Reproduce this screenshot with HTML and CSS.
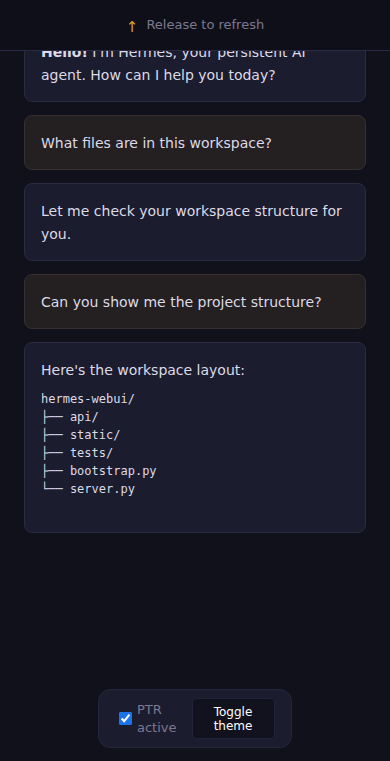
FILE: index.html
```html
<!DOCTYPE html>
<html lang="en">
<head>
    <meta charset="UTF-8">
    <meta name="viewport" content="width=device-width, initial-scale=1.0">
    <title>Hermes - Pull to refresh</title>
    <link rel="stylesheet" href="styles.css">
</head>
<body>

    <div class="ptr-bar">
        <span class="ptr-arrow">↑</span>
        <span class="ptr-text">Release to refresh</span>
    </div>

    <div class="messages">
        <div class="msg assistant">
            <b>Hello!</b> I'm Hermes, your persistent AI agent. How can I help you today?
        </div>
        <div class="msg user">What files are in this workspace?</div>
        <div class="msg assistant">Let me check your workspace structure for you.</div>
        <div class="msg user">Can you show me the project structure?</div>
        <div class="msg assistant">
            <p>Here's the workspace layout:</p>
<pre>hermes-webui/
├── api/
├── static/
├── tests/
├── bootstrap.py
└── server.py</pre>
        </div>
    </div>

    <div class="controls">
        <label class="ptr-toggle">
            <input type="checkbox" checked>
            <span>PTR<br>active</span>
        </label>
        <button class="theme-btn">Toggle<br>theme</button>
    </div>

</body>
</html>
```

FILE: styles.css
```css
body {
    font-family: "DejaVu Sans", sans-serif;
    margin: 0;
    padding: 0;
    height: 761px;
    overflow: hidden;
    background-color: #11111c;
    color: #dcdae6;
}
.ptr-bar {
    position: absolute;
    top: 0;
    left: 0;
    right: 0;
    height: 50px;
    display: flex;
    justify-content: center;
    align-items: center;
    gap: 8px;
    background-color: #0f0f1a;
    border-bottom: 1px solid #2a2a44;
    z-index: 2;
}
.ptr-arrow {
    color: #d9a22a;
    font-size: 15px;
    padding-top: 3px;
}
.ptr-text {
    color: #7b7890;
    font-size: 13px;
    padding-bottom: 2px;
}
.messages {
    display: flex;
    flex-direction: column;
    gap: 13px;
    padding: 24px 24px 0;
}
.msg {
    padding: 16px 16px 14px;
    border-radius: 8px;
    font-size: 14px;
    line-height: 23px;
}
.msg.assistant {
    background-color: #1c1c2f;
    border: 1px solid #2a2a40;
}
.msg.user {
    background-color: #241f21;
    border: 1px solid #36302f;
}
.msg p {
    margin: 0 0 8px;
}
.msg pre {
    margin: 0;
    padding-bottom: 20px;
    font-family: "DejaVu Sans Mono", monospace;
    font-size: 12px;
    line-height: 18px;
}
.controls {
    position: absolute;
    left: 98px;
    top: 689px;
    width: 194px;
    height: 59px;
    box-sizing: border-box;
    display: flex;
    align-items: center;
    gap: 15px;
    padding: 0 16px 0 20px;
    background-color: #1c1c2f;
    border: 1px solid #25253b;
    border-radius: 12px;
}
.ptr-toggle {
    display: flex;
    align-items: center;
    gap: 6px;
    color: #7b7890;
    font-size: 13px;
    line-height: 18px;
}
.ptr-toggle input {
    margin: 0;
    width: 13px;
    height: 13px;
    accent-color: #1a73e8;
}
.ptr-toggle span {
    margin-left: -1px;
}
.theme-btn {
    width: 83px;
    height: 41px;
    padding: 1px 0 0;
    background-color: #12121e;
    color: #ffffff;
    border: 1px solid #22223a;
    border-radius: 4px;
    font-family: "DejaVu Sans", sans-serif;
    font-size: 12px;
    line-height: 14px;
}
```
